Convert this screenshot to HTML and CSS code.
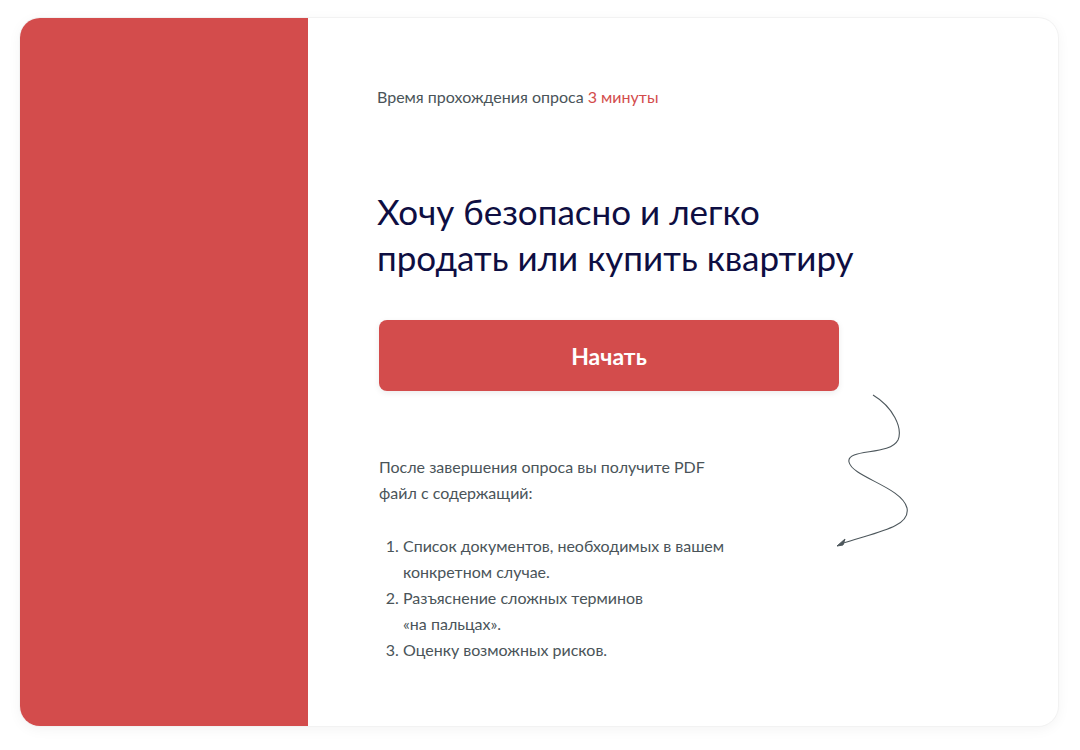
FILE: index.html
```html
<!DOCTYPE html>
<html lang="ru">
<head>
<meta charset="utf-8">
<title>Опрос</title>
<link rel="stylesheet" href="styles.css">
</head>
<body>
<div class="card">
  <div class="side"></div>
  <div class="content">
    <p class="time">Время прохождения опроса <span class="accent">3 минуты</span></p>
    <h1 class="title">Хочу безопасно и легко<br>продать или купить квартиру</h1>
    <button class="start">Начать</button>
    <p class="info">После завершения опроса вы получите PDF<br>файл с содержащий:</p>
    <ol class="list">
      <li>Список документов, необходимых в вашем<br>конкретном случае.</li>
      <li>Разъяснение сложных терминов<br>«на пальцах».</li>
      <li>Оценку возможных рисков.</li>
    </ol>
    <svg class="squiggle" width="120" height="180" viewBox="820 380 120 180" aria-hidden="true">
      <path d="M873,395 C893,407 903,428 898,440 C890,456 846,448 849,462 C852,477 902,487 907,508 C911,528 872,533 841,544" fill="none" stroke="#4d575c" stroke-width="1.1"/>
      <path d="M837,546 L845,539 L843,545 Z" fill="#4d575c" stroke="#4d575c" stroke-width="1"/>
    </svg>
  </div>
</div>
</body>
</html>
```

FILE: styles.css
```css
* { box-sizing: border-box; }
html, body { margin: 0; background: #ffffff; }
body {
  padding: 18px 22px 24px 20px;
  font-family: Lato, "Noto Sans", sans-serif;
}
.card {
  width: 1038px;
  height: 708px;
  display: flex;
  background: #ffffff;
  border-radius: 20px;
  box-shadow: 0 0 0 1px #f2f2f2, 0 3px 14px rgba(0, 0, 0, 0.05);
  overflow: hidden;
}
.side {
  width: 288px;
  flex: none;
  background: #d34c4c;
}
.content {
  position: relative;
  flex: 1;
  padding: 69px 0 0 71px;
  display: flex;
  flex-direction: column;
  align-items: flex-start;
}
.time {
  margin: 0 0 0 -2px;
  font-size: 16px;
  line-height: 20px;
  color: #4a5459;
}
.accent { color: #d34c4c; }
.title {
  margin: 81px 0 0 -2px;
  font-size: 35px;
  line-height: 46px;
  font-weight: 400;
  color: #0e0e42;
}
.start {
  margin-top: 40px;
  width: 460px;
  height: 71px;
  border: none;
  border-radius: 8px;
  background: #d34c4c;
  color: #ffffff;
  font-family: Lato, "Noto Sans", sans-serif;
  font-weight: 700;
  font-size: 23px;
  box-shadow: 0 2px 6px rgba(0, 0, 0, 0.08);
  cursor: pointer;
}
.info {
  margin: 63px 0 0;
  font-size: 16px;
  line-height: 26px;
  color: #4a5459;
}
.list {
  margin: 27px 0 0;
  padding-left: 24px;
  font-size: 16px;
  line-height: 26px;
  color: #4a5459;
}
.squiggle {
  position: absolute;
  left: 512px;
  top: 362px;
}
```
